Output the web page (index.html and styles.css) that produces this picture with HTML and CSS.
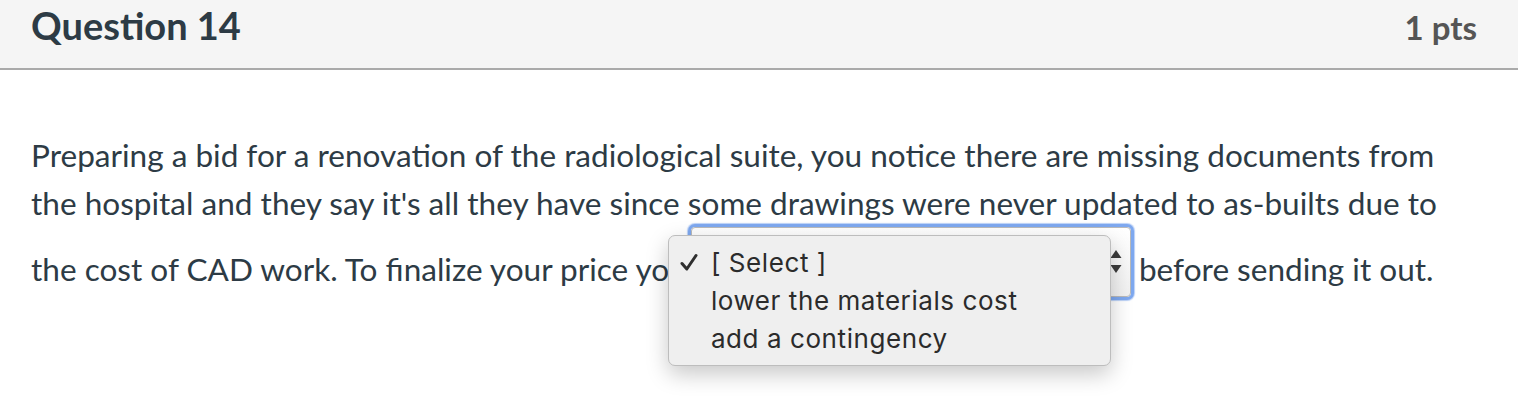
FILE: index.html
```html
<!DOCTYPE html>
<html lang="en">
<head>
<meta charset="utf-8">
<title>Question 14</title>
<link rel="stylesheet" href="styles.css">
</head>
<body>
<div class="question">
  <header class="q-header">
    <h2 class="q-title">Question 14</h2>
    <div class="q-points">1 pts</div>
  </header>
  <div class="q-body">
    <p class="q-text">Preparing a bid for a renovation of the radiological suite, you notice there are missing documents from the hospital and they say it's all they have since some drawings were never updated to as-builts due to the cost of CAD work. To finalize your price you <span class="select-wrap"><span class="select"><span class="select-value">[ Select ]</span><svg class="select-arrows" width="12" height="26" viewBox="0 0 12 26"><polygon points="6,1 11.5,9 0.5,9" fill="#3a3a3a"/><polygon points="0.5,16 11.5,16 6,24" fill="#3a3a3a"/></svg></span><span class="popup"><span class="popup-item is-checked"><svg class="check" width="20" height="20" viewBox="0 0 20 20"><path d="M3 10.5 L7.8 16 L17 2.5" fill="none" stroke="#2f2f2f" stroke-width="3" stroke-linecap="round" stroke-linejoin="round"/></svg>[ Select ]</span><span class="popup-item">lower the materials cost</span><span class="popup-item">add a contingency</span></span></span> before sending it out.</p>
  </div>
</div>
</body>
</html>
```

FILE: styles.css
```css
html, body {
  margin: 0;
  padding: 0;
  background: #ffffff;
}

.question {
  min-height: 410px;
  font-family: Lato, "Open Sans", sans-serif;
  color: #2d3b45;
}

.q-header {
  display: flex;
  justify-content: space-between;
  align-items: baseline;
  height: 70px;
  box-sizing: border-box;
  padding: 3px 41px 0 31px;
  background: #f5f5f5;
  border-bottom: 2px solid #aaaaaa;
}

.q-title {
  margin: 0;
  font-size: 38px;
  line-height: 44px;
  font-weight: 700;
  color: #2d3b45;
}

.q-points {
  font-size: 33px;
  line-height: 44px;
  font-weight: 700;
  color: #555555;
}

.q-body {
  padding: 61px 40px 0 31px;
}

.q-text {
  margin: 0;
  font-size: 31.55px;
  line-height: 48px;
}

.select-wrap {
  position: relative;
  display: inline-block;
  vertical-align: middle;
  margin: 0 0 22px -4px;
}

.select {
  display: flex;
  align-items: center;
  justify-content: space-between;
  box-sizing: border-box;
  width: 440px;
  height: 70px;
  padding: 0 8px 0 18px;
  border: 1px solid #b9b9b9;
  border-radius: 4px;
  background: linear-gradient(#ffffff, #f1f1f1);
  box-shadow: 0 0 0 3px #7ea8ef, 0 0 1px 4px rgba(126, 168, 239, 0.55);
  font-family: "Liberation Sans", Arial, sans-serif;
  font-size: 24px;
  color: #333333;
}

.select-arrows {
  display: block;
}

.popup {
  position: absolute;
  left: -23px;
  top: 8px;
  width: 443px;
  box-sizing: border-box;
  padding: 8px 0 7px 0;
  background: #efefef;
  border: 1px solid #bdbdbd;
  border-radius: 7px;
  box-shadow: 0 8px 22px rgba(0, 0, 0, 0.22);
  font-family: Inter, "Liberation Sans", sans-serif;
  font-size: 26px;
  letter-spacing: 0.58px;
  color: #2b2b2b;
  line-height: 38px;
  z-index: 2;
}

.popup-item {
  position: relative;
  display: block;
  padding-left: 42px;
  white-space: nowrap;
}

.check {
  position: absolute;
  left: 10px;
  top: 9px;
}
```
